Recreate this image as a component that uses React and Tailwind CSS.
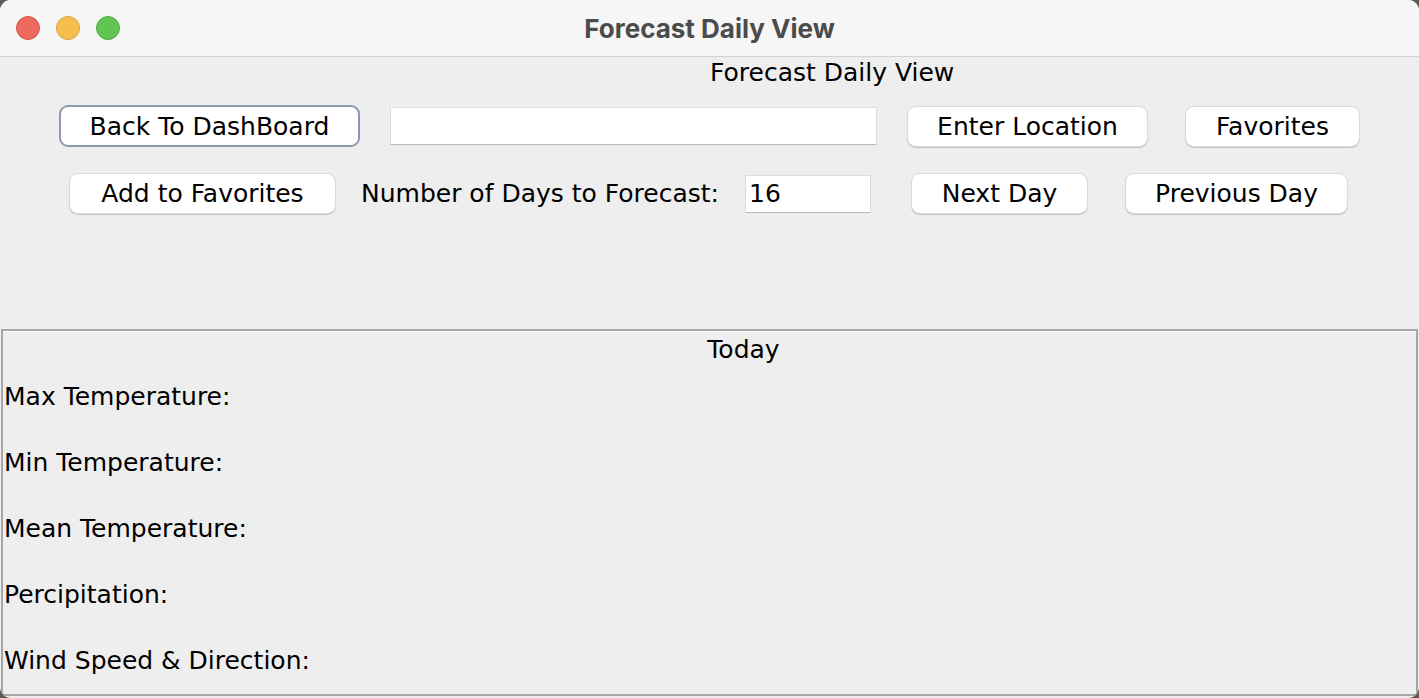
import React from "react";

const body = { fontFamily: '"DejaVu Sans", "Liberation Sans", sans-serif' };

function Btn({ children, className = "", focused = false }) {
  return (
    <button
      className={
        "flex items-center justify-center bg-white rounded-[9px] text-[25px] text-black leading-none " +
        (focused
          ? "border-2 border-[#8a99ad] "
          : "border border-[#d9d9d9] shadow-[0_1px_1px_rgba(0,0,0,0.18)] ") +
        className
      }
    >
      {children}
    </button>
  );
}

function Field({ value = "", className = "" }) {
  return (
    <div
      className={
        "flex items-center bg-white border-t border-l border-r border-[#dcdcdc] border-b border-b-[#b9b9b9] px-[3px] text-[25px] text-black " +
        className
      }
    >
      {value}
    </div>
  );
}

export default function App() {
  const rows = [
    "Max Temperature:",
    "Min Temperature:",
    "Mean Temperature:",
    "Percipitation:",
    "Wind Speed & Direction:",
  ];

  return (
    <div className="w-[1419px] h-[698px] bg-[#5e5a56] overflow-hidden" style={body}>
      <div className="w-full h-full rounded-[11px] overflow-hidden bg-[#eeeeee] flex flex-col">
        {/* title bar */}
        <div className="h-[57px] shrink-0 bg-[#f6f6f6] border-b border-[#d2d2d2] flex items-center relative">
          <div className="flex items-center gap-[16px] pl-[16px]">
            <span className="w-[24px] h-[24px] rounded-full bg-[#ee6a5f] border border-[#d5574c]" />
            <span className="w-[24px] h-[24px] rounded-full bg-[#f5bf4f] border border-[#d9a33a]" />
            <span className="w-[24px] h-[24px] rounded-full bg-[#61c554] border border-[#4caa40]" />
          </div>
          <div
            className="absolute inset-0 flex items-center justify-center text-[26px] font-bold text-[#4b4b4b]"
            style={{ fontFamily: 'Inter, "Liberation Sans", sans-serif' }}
          >
            Forecast Daily View
          </div>
        </div>

        {/* header label */}
        <div className="ml-[710px] mt-[2px] h-[28px] leading-[28px] text-[25px] text-black">
          Forecast Daily View
        </div>

        {/* row 1 */}
        <div className="flex items-center mt-[18px] h-[42px]">
          <Btn focused className="ml-[59px] w-[301px] h-[42px]">Back To DashBoard</Btn>
          <Field className="ml-[30px] w-[487px] h-[38px]" />
          <Btn className="ml-[30px] w-[241px] h-[41px]">Enter Location</Btn>
          <Btn className="ml-[37px] w-[175px] h-[41px]">Favorites</Btn>
        </div>

        {/* row 2 */}
        <div className="flex items-center mt-[26px] h-[41px]">
          <Btn className="ml-[69px] w-[267px] h-[41px]">Add to Favorites</Btn>
          <div className="ml-[25px] w-[384px] text-[25px] text-black whitespace-nowrap">
            Number of Days to Forecast:
          </div>
          <Field value="16" className="w-[126px] h-[38px]" />
          <Btn className="ml-[40px] w-[177px] h-[41px]">Next Day</Btn>
          <Btn className="ml-[37px] w-[223px] h-[41px]">Previous Day</Btn>
        </div>

        {/* day panel */}
        <div className="mt-[115px] mx-[1px] mb-[2px] flex-1 border-2 border-[#a6a6a6] flex flex-col">
          <div className="h-[36px] leading-[36px] text-[25px] text-black text-center pl-[68px] border-t border-white">
            Today
          </div>
          <div className="flex flex-col pl-[1px] mt-[14px] gap-[34px]">
            {rows.map((r) => (
              <div key={r} className="h-[32px] leading-[32px] text-[25px] text-black">
                {r}
              </div>
            ))}
          </div>
        </div>
      </div>
    </div>
  );
}
